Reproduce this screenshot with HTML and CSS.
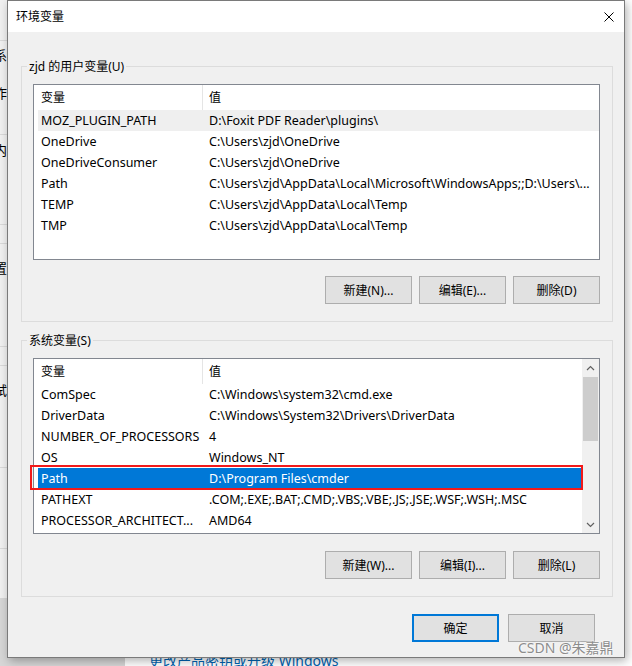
FILE: index.html
```html
<!DOCTYPE html>
<html lang="zh-CN">
<head>
<meta charset="utf-8">
<title>环境变量</title>
<link rel="stylesheet" href="styles.css">
</head>
<body>
<div class="desktop">
  <div class="bg-window">
    <div class="sec s1"></div>
    <div class="sec s2"><div class="frag f1">系统</div><div class="frag f2">作为</div></div>
    <div class="sec s3"><div class="frag f3">内存</div></div>
    <div class="sec s4"></div>
    <div class="sec s5"><div class="frag f4">置</div></div>
    <div class="sec s6"></div>
    <div class="sec s7"><div class="frag f5">试件</div></div>
    <div class="sec s8"></div>
  </div>
  <div class="bg-link">更改产品密钥或升级 Windows</div>

  <div class="dialog">
    <div class="titlebar">
      <span class="title">环境变量</span>
      <svg class="close" width="10" height="10" viewBox="0 0 10 10"><path d="M0.5 0.5L9.5 9.5M9.5 0.5L0.5 9.5" stroke="#000" stroke-width="1" fill="none"/></svg>
    </div>
    <div class="dialog-body">
      <fieldset class="group">
        <legend>zjd 的用户变量(U)</legend>
        <div class="group-inner">
          <div class="listview">
            <div class="lv-main">
              <div class="lv-header"><div class="h1">变量</div><div class="h2">值</div></div>
              <div class="lv-row hot"><div class="c1">MOZ_PLUGIN_PATH</div><div class="c2">D:\Foxit PDF Reader\plugins\</div></div>
              <div class="lv-row"><div class="c1">OneDrive</div><div class="c2">C:\Users\zjd\OneDrive</div></div>
              <div class="lv-row"><div class="c1">OneDriveConsumer</div><div class="c2">C:\Users\zjd\OneDrive</div></div>
              <div class="lv-row"><div class="c1">Path</div><div class="c2">C:\Users\zjd\AppData\Local\Microsoft\WindowsApps;;D:\Users\...</div></div>
              <div class="lv-row"><div class="c1">TEMP</div><div class="c2">C:\Users\zjd\AppData\Local\Temp</div></div>
              <div class="lv-row"><div class="c1">TMP</div><div class="c2">C:\Users\zjd\AppData\Local\Temp</div></div>
            </div>
          </div>
          <div class="btn-row">
            <button class="btn">新建(N)...</button>
            <button class="btn">编辑(E)...</button>
            <button class="btn">删除(D)</button>
          </div>
        </div>
      </fieldset>

      <fieldset class="group group2">
        <legend>系统变量(S)</legend>
        <div class="group-inner">
          <div class="listview">
            <div class="lv-main">
              <div class="lv-header"><div class="h1">变量</div><div class="h2">值</div></div>
              <div class="lv-row"><div class="c1">ComSpec</div><div class="c2">C:\Windows\system32\cmd.exe</div></div>
              <div class="lv-row"><div class="c1">DriverData</div><div class="c2">C:\Windows\System32\Drivers\DriverData</div></div>
              <div class="lv-row"><div class="c1">NUMBER_OF_PROCESSORS</div><div class="c2">4</div></div>
              <div class="lv-row"><div class="c1">OS</div><div class="c2">Windows_NT</div></div>
              <div class="lv-row selected"><div class="c1">Path</div><div class="c2">D:\Program Files\cmder</div></div>
              <div class="lv-row"><div class="c1">PATHEXT</div><div class="c2">.COM;.EXE;.BAT;.CMD;.VBS;.VBE;.JS;.JSE;.WSF;.WSH;.MSC</div></div>
              <div class="lv-row"><div class="c1">PROCESSOR_ARCHITECT...</div><div class="c2">AMD64</div></div>
            </div>
            <div class="scrollbar">
              <div class="sb-btn"><svg width="9" height="6" viewBox="0 0 9 6"><path d="M1 5L4.5 1.5L8 5" stroke="#606060" stroke-width="1.2" fill="none"/></svg></div>
              <div class="sb-track"><div class="sb-thumb"></div></div>
              <div class="sb-btn"><svg width="9" height="6" viewBox="0 0 9 6"><path d="M1 1L4.5 4.5L8 1" stroke="#606060" stroke-width="1.2" fill="none"/></svg></div>
            </div>
          </div>
          <div class="btn-row">
            <button class="btn">新建(W)...</button>
            <button class="btn">编辑(I)...</button>
            <button class="btn">删除(L)</button>
          </div>
        </div>
      </fieldset>

      <div class="btn-row dialog-buttons">
        <button class="btn default">确定</button>
        <button class="btn">取消</button>
      </div>
    </div>
  </div>

  <div class="watermark">CSDN @朱嘉鼎</div>
</div>
</body>
</html>
```

FILE: styles.css
```css
* { box-sizing: border-box; }
html, body { margin: 0; padding: 0; }
body {
  width: 632px;
  height: 666px;
  overflow: hidden;
  font-family: "Noto Sans", "Noto Sans CJK SC", sans-serif;
  font-size: 12px;
  color: #000;
  background: #fbfbfb;
}
.desktop {
  position: relative;
  width: 632px;
  height: 666px;
  overflow: hidden;
  background: linear-gradient(to right, #d6d6d6 0, #d6d6d6 125px, #ffffff 125px);
}

/* background window peeking out on the left */
.bg-window {
  position: absolute;
  left: -120px;
  top: 0;
  width: 245px;
  height: 598px;
  background: #f0f0f0;
}
.sec { border-bottom: 1px solid #d9d9d9; padding-left: 114px; }
.s1 { height: 41px; }
.s2 { height: 94px; padding-top: 6px; }
.s3 { height: 90px; padding-top: 7px; }
.s4 { height: 19px; }
.s5 { height: 103px; padding-top: 16px; }
.s6 { height: 19px; }
.s7 { height: 102px; padding-top: 16px; }
.s8 { height: 81px; }
.frag { font-size: 13px; line-height: 17px; white-space: nowrap; }
.f2 { margin-top: 21px; }

.bg-link {
  position: absolute;
  left: 149px;
  top: 652px;
  font-size: 14px;
  line-height: 18px;
  color: #0063b1;
  white-space: nowrap;
}

/* dialog */
.dialog {
  position: absolute;
  left: 7px;
  top: 0;
  width: 618px;
  border: 1px solid #7a7a7a;
  background: #f0f0f0;
  box-shadow: 2px 3px 9px rgba(0, 0, 0, 0.3);
}
.titlebar {
  height: 31px;
  background: #ffffff;
  display: flex;
  align-items: center;
  justify-content: space-between;
  padding: 0 10px 0 8px;
}
.title { font-size: 12px; line-height: 16px; }
.close { display: block; }

.dialog-body {
  padding: 26px 11px 15px 13px;
}
.group {
  margin: 0;
  padding: 0;
  min-width: 0;
  border: 1px solid #dcdcdc;
}
.group2 { margin-top: 10px; }
.group legend {
  margin-left: 5px;
  padding: 0 2px;
  font-size: 12px;
  line-height: 17px;
}
.group-inner {
  padding: 9px 12px 17px 11px;
}

.listview {
  height: 176px;
  border: 1px solid #828790;
  background: #ffffff;
  display: flex;
}
.lv-main { flex: 1; min-width: 0; }
.lv-header {
  height: 25px;
  display: flex;
  align-items: stretch;
  padding-left: 4px;
}
.h1 {
  width: 164px;
  padding-left: 3px;
  line-height: 25px;
}
.h2 {
  flex: 1;
  border-left: 1px solid #e5e5e5;
  padding-left: 6px;
  line-height: 25px;
}
.lv-row {
  height: 21px;
  margin-left: 4px;
  display: flex;
  font-size: 12.5px;
  line-height: 21px;
  white-space: nowrap;
}
.c1 { width: 164px; flex: none; padding-left: 3px; overflow: hidden; }
.c2 { flex: 1; padding-left: 7px; overflow: hidden; }
.lv-row.hot { background: #efefef; }
.lv-row.selected {
  position: relative;
  background: #0078d7;
  color: #ffffff;
}
.lv-row.selected::after {
  content: "";
  position: absolute;
  left: -8px;
  right: -1px;
  top: -3px;
  bottom: -1px;
  border: 2px solid #f21a1a;
}

.scrollbar {
  width: 17px;
  flex: none;
  background: #f0f0f0;
  display: flex;
  flex-direction: column;
}
.sb-btn {
  height: 17px;
  display: flex;
  align-items: center;
  justify-content: center;
}
.sb-btn svg { display: block; }
.sb-track { flex: 1; padding: 1px 1px 0 1px; }
.sb-thumb { height: 64px; background: #cdcdcd; }

.btn-row {
  display: flex;
  justify-content: flex-end;
  gap: 7px;
  margin-top: 16px;
}
.group2 .btn-row { margin-top: 17px; }
.btn {
  width: 87px;
  height: 28px;
  margin: 0;
  padding: 0;
  border: 1px solid #adadad;
  background: #e1e1e1;
  font-family: "Noto Sans", "Noto Sans CJK SC", sans-serif;
  font-size: 12px;
  color: #000;
}
.btn.default { border: 2px solid #0078d7; }
.dialog-buttons {
  margin-top: 17px;
  gap: 9px;
  padding-right: 18px;
}

.watermark {
  position: absolute;
  left: 518px;
  top: 639px;
  font-size: 14px;
  line-height: 18px;
  color: #8c8c8c;
  white-space: nowrap;
  text-shadow: 0 0 2px #ffffff, 0 0 2px #ffffff;
}
```
